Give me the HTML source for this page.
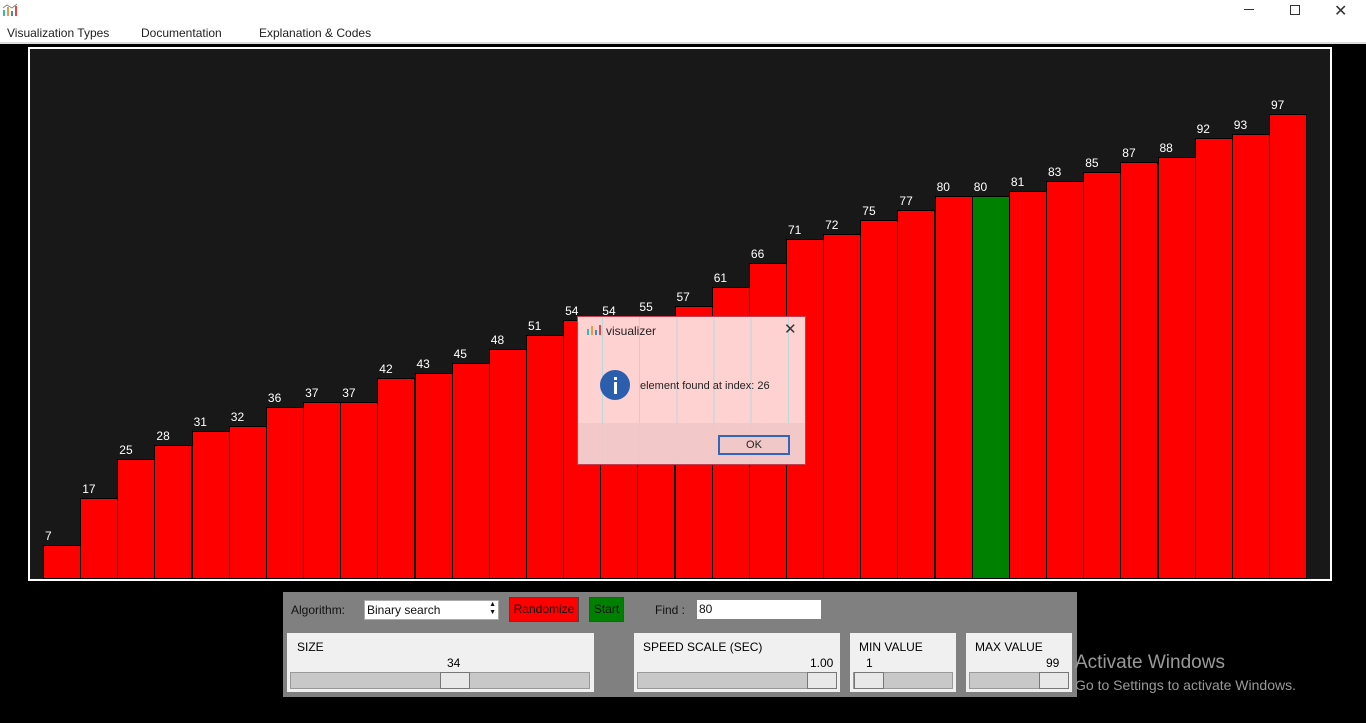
<!DOCTYPE html>
<html><head><meta charset="utf-8"><style>
body{margin:0;width:1366px;height:723px;background:#000;position:relative;overflow:hidden;font-family:"Liberation Sans",sans-serif;}
.a{position:absolute;}
.bar{position:absolute;background:#f00;border:1px solid #000;box-sizing:border-box;}
.lbl{position:absolute;color:#fff;font-size:12px;}
.menu{font-size:12px;color:#222;top:26px;}
.panel{background:#f0f0f0;position:absolute;}
.trk{position:absolute;background:#c8c8c8;border:1px solid #999;box-sizing:border-box;height:17px;}
.th{position:absolute;background:#e8e8e8;border:1px solid #777;box-sizing:border-box;height:17px;top:-1px;}
</style></head><body>
<div class="a" style="left:0;top:0;width:1366px;height:42px;background:#fff"></div>
<div class="a" style="left:0;top:42px;width:1366px;height:2px;background:#ddd"></div>
<svg class="a" style="left:2px;top:3px" width="16" height="14"><rect x="1" y="7" width="2" height="6" fill="#3bb"/><rect x="5" y="4" width="2" height="9" fill="#e94"/><rect x="9" y="8" width="2" height="5" fill="#48c"/><rect x="13" y="3" width="2" height="10" fill="#e44"/><path d="M1 5 L5 2 L10 5 L15 1" stroke="#888" fill="none"/></svg>
<div class="a" style="left:1244px;top:9px;width:10px;height:1px;background:#333"></div>
<div class="a" style="left:1290px;top:5px;width:8px;height:8px;border:1px solid #333"></div>
<div class="a" style="left:1334px;top:1px;font-size:16px;color:#333">✕</div>
<div class="a menu" style="left:7px">Visualization Types</div>
<div class="a menu" style="left:141px">Documentation</div>
<div class="a menu" style="left:259px">Explanation &amp; Codes</div>
<div class="a" style="left:28px;top:47px;width:1304px;height:534px;border:2px solid #fff;box-sizing:border-box;background:#181818"></div>
<div id="bars"></div>
<script>
var v=[7,17,25,28,31,32,36,37,37,42,43,45,48,51,54,54,55,57,61,66,71,72,75,77,80,80,81,83,85,87,88,92,93,97];
var h='';for(var i=0;i<v.length;i++){var x=43+i*37.15,ht=Math.round(v[i]*4.79),t=579-ht;
h+='<div class="bar" style="left:'+x.toFixed(1)+'px;top:'+t+'px;width:38px;height:'+ht+'px;'+(i==25?'background:#008000':'')+'"></div>';
h+='<div class="lbl" style="left:'+(x+2).toFixed(1)+'px;top:'+(t-16)+'px">'+v[i]+'</div>';}
document.getElementById('bars').innerHTML=h;
</script>
<div class="a" style="left:577px;top:316px;width:229px;height:149px;background:#ffd2d2;border:1px solid #c04050;box-sizing:border-box;background-image:repeating-linear-gradient(90deg,transparent 0 24px,#b8d8dc 24px 25px,transparent 25px 37.15px);background-position:0 0"></div>
<div class="a" style="left:578px;top:423px;width:227px;height:41px;background:#f2c6c6;opacity:.9"></div>
<svg class="a" style="left:586px;top:322px" width="16" height="14"><rect x="1" y="7" width="2" height="6" fill="#3bb"/><rect x="5" y="4" width="2" height="9" fill="#e94"/><rect x="9" y="8" width="2" height="5" fill="#48c"/><rect x="13" y="3" width="2" height="10" fill="#e44"/></svg>
<div class="a" style="left:606px;top:324px;font-size:12px;color:#222">visualizer</div>
<div class="a" style="left:784px;top:320px;font-size:15px;color:#333">✕</div>
<div class="a" style="left:600px;top:370px;width:30px;height:30px;border-radius:50%;background:#2b5fae"><div class="a" style="left:14px;top:7px;width:3px;height:3px;background:#fff"></div><div class="a" style="left:14px;top:12px;width:3px;height:12px;background:#fff"></div></div>
<div class="a" style="left:640px;top:380px;font-size:11px;color:#222">element found at index: 26</div>
<div class="a" style="left:718px;top:435px;width:72px;height:20px;border:2px solid #3366bb;box-sizing:border-box;background:#f0c8c8;font-size:11px;text-align:center;line-height:16px;color:#222">OK</div>
<div class="a" style="left:283px;top:592px;width:794px;height:105px;background:#808080"></div>
<div class="a" style="left:291px;top:603px;font-size:12px;color:#111">Algorithm:</div>
<div class="a" style="left:364px;top:600px;width:135px;height:20px;background:#fff;border:1px solid #aaa;box-sizing:border-box;font-size:12px;line-height:18px;padding-left:2px;color:#111">Binary search<span style="position:absolute;right:2px;top:0;font-size:7px;line-height:8px">▲<br>▼</span></div>
<div class="a" style="left:509px;top:597px;width:70px;height:25px;background:#f00;border:1px solid #444;box-sizing:border-box;font-size:12px;text-align:center;line-height:23px;color:#111">Randomize</div>
<div class="a" style="left:589px;top:597px;width:35px;height:25px;background:#008000;border:1px solid #444;box-sizing:border-box;font-size:12px;text-align:center;line-height:23px;color:#111">Start</div>
<div class="a" style="left:655px;top:603px;font-size:12px;color:#111">Find :</div>
<div class="a" style="left:697px;top:600px;width:124px;height:19px;background:#fff;font-size:12px;line-height:19px;padding-left:2px;box-sizing:border-box;color:#111">80</div>
<div class="panel" style="left:287px;top:633px;width:307px;height:59px"><div class="a" style="left:10px;top:7px;font-size:12px">SIZE</div><div class="a" style="left:160px;top:23px;font-size:12px">34</div><div class="trk" style="left:3px;top:39px;width:300px"><div class="th" style="left:149px;width:30px"></div></div></div>
<div class="panel" style="left:634px;top:633px;width:206px;height:59px"><div class="a" style="left:9px;top:7px;font-size:12px">SPEED SCALE (SEC)</div><div class="a" style="left:176px;top:23px;font-size:12px">1.00</div><div class="trk" style="left:3px;top:39px;width:200px"><div class="th" style="left:169px;width:30px"></div></div></div>
<div class="panel" style="left:850px;top:633px;width:106px;height:59px"><div class="a" style="left:9px;top:7px;font-size:12px">MIN VALUE</div><div class="a" style="left:16px;top:23px;font-size:12px">1</div><div class="trk" style="left:3px;top:39px;width:100px"><div class="th" style="left:0;width:30px"></div></div></div>
<div class="panel" style="left:966px;top:633px;width:106px;height:59px"><div class="a" style="left:9px;top:7px;font-size:12px">MAX VALUE</div><div class="a" style="left:80px;top:23px;font-size:12px">99</div><div class="trk" style="left:3px;top:39px;width:100px"><div class="th" style="left:69px;width:30px"></div></div></div>
<div class="a" style="left:1075px;top:652px;font-size:19px;color:#999">Activate Windows</div>
<div class="a" style="left:1075px;top:677px;font-size:14px;color:#999">Go to Settings to activate Windows.</div>
</body></html>
